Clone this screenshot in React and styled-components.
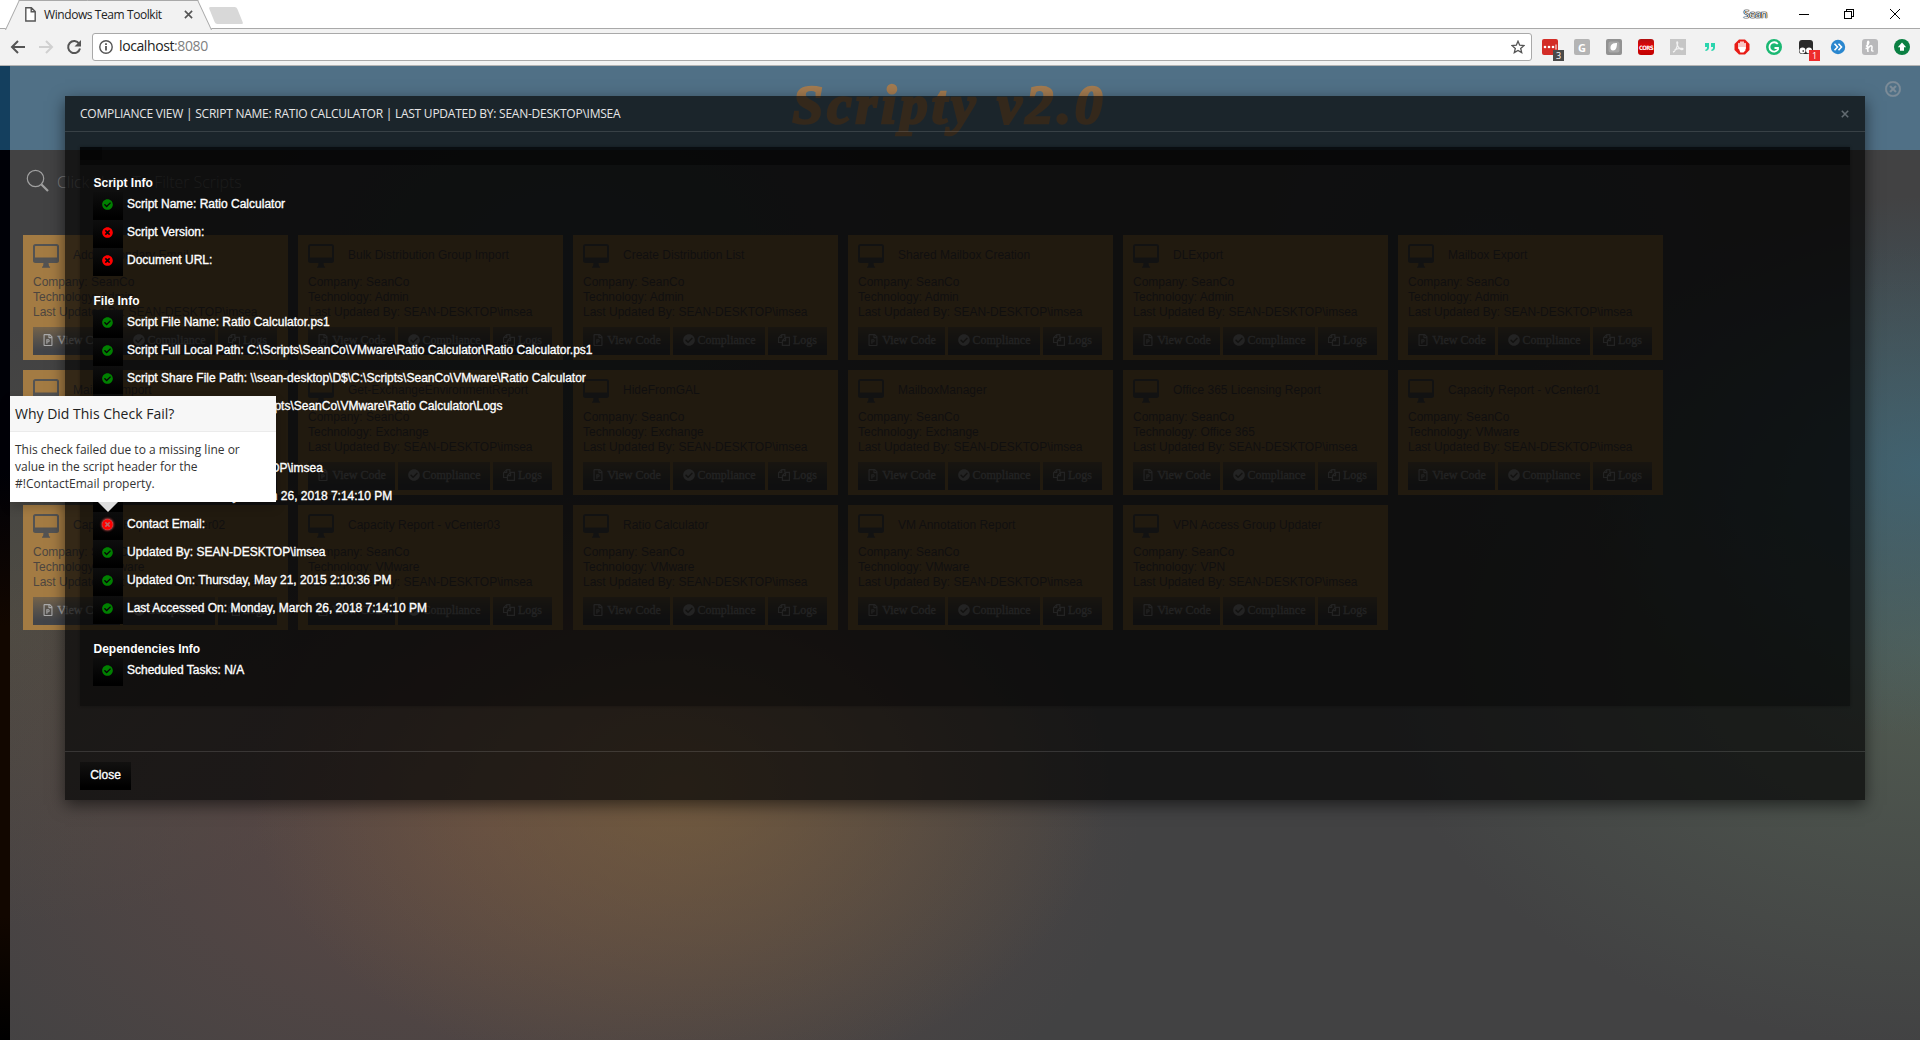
import React from "react";
import styled, { createGlobalStyle, css } from "styled-components";
import {
  FaCheckCircle,
  FaTimesCircle,
  FaRegTimesCircle,
  FaRegFilePowerpoint,
} from "react-icons/fa";

const ui = '"Open Sans", "Noto Sans", sans-serif';
const arial = '"Liberation Sans", Arial, sans-serif';

const GlobalStyle = createGlobalStyle`
  * { box-sizing: border-box; }
  body { margin: 0; background: #000; overflow: hidden; }
`;

const Window = styled.div`
  width: 1920px;
  height: 1040px;
  display: flex;
  flex-direction: column;
  overflow: hidden;
  font-family: ${arial};
`;

/* ---------- browser chrome ---------- */

const TabStrip = styled.div`
  height: 29px;
  display: flex;
  align-items: flex-start;
  background: #fff;
  border-bottom: 1px solid #a9a9a9;
  padding-left: 12px;
`;

const Tab = styled.div`
  position: relative;
  z-index: 1;
  width: 193px;
  height: 29px;
  display: flex;
  align-items: center;
  padding: 0 0 0 13px;
  font: 12px ${ui};
  color: #222;
  &::before,
  &::after {
    content: "";
    position: absolute;
    z-index: -1;
    top: 0;
    height: 29px;
    width: 110px;
    background: #f2f2f2;
    border-top: 1px solid #a9a9a9;
  }
  &::before {
    left: 0;
    border-left: 1px solid #a9a9a9;
    transform: skewX(-25deg);
  }
  &::after {
    right: 0;
    border-right: 1px solid #a9a9a9;
    transform: skewX(25deg);
  }
`;

const TabTitle = styled.span`
  margin-left: 8px;
  width: 140px;
  white-space: nowrap;
  letter-spacing: -0.42px;
  line-height: 28px;
`;

const NewTab = styled.div`
  width: 28px;
  height: 17px;
  margin: 7px 0 0 7px;
  border-radius: 2px;
  background: #d8d8d8;
  transform: skewX(22deg);
`;

const WindowControls = styled.div`
  margin-left: auto;
  height: 27px;
  display: flex;
  align-items: center;
  padding-right: 20px;
`;

const UserName = styled.span`
  font: 11px ${ui};
  letter-spacing: -0.4px;
  color: #fff;
  text-shadow: 0 0 1px #000, 0 0 1px #000, 0 0 1px #000, 0 0 1px #222;
  margin-right: 32px;
`;

const ControlIcon = styled.svg`
  width: 10px;
  height: 10px;
  margin-left: ${(p) => p.$gap || 0}px;
  fill: none;
  stroke: #000;
  shape-rendering: ${(p) => (p.$smooth ? "auto" : "crispEdges")};
`;

const Toolbar = styled.div`
  height: 37px;
  display: flex;
  align-items: center;
  background: #f2f2f2;
  border-bottom: 1px solid #b4b4b4;
  padding: 0 10px 0 10px;
`;

const NavIcon = styled.svg`
  width: 16px;
  height: 16px;
  margin-right: 12px;
  fill: none;
  stroke: ${(p) => (p.$off ? "#d0d0d0" : "#555")};
  stroke-width: 2;
`;

const AddressBar = styled.div`
  width: 1440px;
  height: 28px;
  display: flex;
  align-items: center;
  margin-left: -2px;
  padding: 0 6px;
  background: #fff;
  border: 1px solid #a9a9a9;
  border-radius: 3px;
  font: 14px/24px ${ui};
  color: #222;
`;

const Url = styled.span`
  flex: 1;
  margin: -2px 0 0 6px;
  letter-spacing: -0.4px;
  i {
    font-style: normal;
    color: #808080;
  }
`;

const Extensions = styled.div`
  display: flex;
  gap: 16px;
  margin-left: 10px;
`;

const Ext = styled.div`
  position: relative;
  width: 16px;
  height: 16px;
  display: flex;
  align-items: center;
  justify-content: center;
  border-radius: ${(p) => p.$radius ?? 2}px;
  background: ${(p) => p.$bg || "transparent"};
  color: ${(p) => p.$color || "#fff"};
  font: ${(p) => p.$font || `bold 11px ${ui}`};
  letter-spacing: ${(p) => p.$spacing || 0};
  svg {
    width: 16px;
    height: 16px;
    display: block;
  }
`;

const Badge = styled.span`
  position: absolute;
  left: 11px;
  top: 11px;
  width: 11px;
  height: 11px;
  line-height: 11px;
  text-align: center;
  background: ${(p) => p.$bg};
  color: #fff;
  font: 9px/11px ${ui};
`;

/* ---------- page behind the dialog ---------- */

const Page = styled.div`
  position: relative;
  flex: 1;
  display: flex;
  background: linear-gradient(#143f5e 84px, #000107 84px, #000107 400px, #120700 560px, #120700 850px, #000 100%);
  padding-left: 10px;
`;

const Workspace = styled.main`
  flex: 1;
  display: flex;
  flex-direction: column;
  background:
    radial-gradient(ellipse 430px 300px at 670px 720px, rgba(125, 98, 60, 0.7), rgba(125, 98, 60, 0) 100%),
    radial-gradient(ellipse 650px 400px at 480px 760px, rgba(110, 76, 70, 0.6), rgba(110, 76, 70, 0) 100%),
    radial-gradient(ellipse 360px 270px at 1910px 400px, rgba(62, 104, 124, 0.75), rgba(62, 100, 116, 0) 100%),
    radial-gradient(ellipse 560px 400px at 1920px 580px, rgba(92, 110, 92, 0.6), rgba(92, 104, 92, 0) 100%),
    radial-gradient(ellipse 420px 300px at 560px 200px, rgba(56, 84, 96, 0.5), rgba(56, 84, 96, 0) 100%),
    radial-gradient(ellipse 300px 300px at 1480px 200px, rgba(56, 76, 92, 0.5), rgba(56, 84, 96, 0) 100%),
    radial-gradient(ellipse 400px 300px at 0px 560px, rgba(84, 80, 66, 0.6), rgba(84, 80, 66, 0) 100%),
    #424243;
`;

const Banner = styled.header`
  height: 84px;
  display: flex;
  align-items: flex-start;
  background: #507086;
`;

const Logo = styled.h1`
  flex: 1;
  margin: 4px 0 0 4px;
  text-align: center;
  font: italic bold 55px/70px "Liberation Serif", "Times New Roman", serif;
  letter-spacing: 4px;
  color: #a37b50;
  -webkit-text-stroke: 2.5px #a37b50;
`;

const BannerClose = styled(FaRegTimesCircle)`
  width: 16px;
  height: 16px;
  margin: 15px 19px 0 0;
  color: #7e8d99;
  stroke: #7e8d99;
  stroke-width: 16px;
`;

const Search = styled.div`
  height: 85px;
  display: flex;
  align-items: flex-start;
  padding: 19px 0 0 16px;
  font: 300 16px/26px ${ui};
  color: #808080;
  svg {
    width: 24px;
    height: 24px;
    fill: none;
    stroke: #a0a0a0;
  }
  span {
    margin-left: 7px;
    letter-spacing: -0.06px;
  }
`;

const CardGrid = styled.div`
  display: grid;
  grid-template-columns: repeat(6, 265px);
  grid-auto-rows: 125px;
  gap: 10px;
  padding-left: 13px;
`;

const Card = styled.article`
  display: flex;
  flex-direction: column;
  padding: 7px 10px 5px;
  background: #a37b43;
  color: #4d4640;
  font-size: 12px;
  line-height: 15px;
`;

const CardHead = styled.div`
  display: flex;
  align-items: center;
  gap: 14px;
  height: 27px;
  margin-bottom: 6px;
  svg {
    width: 26px;
    height: 25px;
    fill: none;
    stroke: #535353;
  }
`;

const CardActions = styled.div`
  display: flex;
  gap: 3px;
  margin-top: auto;
`;

const CardButton = styled.button`
  width: ${(p) => p.$w}px;
  height: 28px;
  display: flex;
  align-items: center;
  justify-content: center;
  gap: 3px;
  padding: 0 0 2px;
  border: 0;
  background: linear-gradient(#75634a, #5a544c 40%, #424449 85%);
  color: #aaa;
  font: 12px "Liberation Serif", "Times New Roman", serif;
  -webkit-text-stroke: 0.3px #aaa;
  svg {
    width: 12px;
    height: 12px;
    stroke-width: 0;
  }
`;

/* ---------- compliance dialog ---------- */

const Dialog = styled.section`
  position: absolute;
  left: 65px;
  top: 30px;
  width: 1800px;
  height: 704px;
  display: flex;
  flex-direction: column;
  background: rgba(5, 5, 5, 0.704);
  box-shadow: 0 5px 15px rgba(0, 0, 0, 0.55);
`;

const DialogHeader = styled.div`
  height: 36px;
  display: flex;
  align-items: center;
  justify-content: space-between;
  padding: 0 16px 0 15px;
  border-bottom: 1px solid rgba(255, 255, 255, 0.13);
  font: 12px ${ui};
  letter-spacing: -0.24px;
  color: #e6e6e6;
  svg {
    width: 8px;
    height: 8px;
    stroke: #626b71;
    stroke-width: 2;
  }
`;

const DialogBody = styled.div`
  flex: 1;
  padding: 15px 15px 0;
`;

const Panel = styled.div`
  height: 559px;
  display: flex;
  flex-direction: column;
  background: rgba(0, 0, 0, 0.35);
  box-shadow: 0 0 3px rgba(0, 0, 0, 0.3);
`;

const PanelTabs = styled.div`
  height: 18px;
  background: rgba(0, 0, 0, 0.42);
  &::before {
    content: "";
    display: block;
    width: 22px;
    height: 13px;
    background: rgba(0, 0, 0, 0.35);
  }
`;

const Groups = styled.div`
  display: flex;
  flex-direction: column;
  gap: 16px;
  padding: 9px 13px;
`;

const GroupTitle = styled.h2`
  margin: 0 0 0 0.5px;
  font: bold 12px/18px ${arial};
  color: #fff;
`;

const CheckRow = styled.div`
  height: 28px;
  display: flex;
  color: #fff;
  font-size: 12px;
  line-height: 25px;
  white-space: pre;
  -webkit-text-stroke: 0.35px #fff;
`;

const CheckBox = styled.span`
  width: 30px;
  height: 28px;
  margin-right: 4px;
  display: flex;
  justify-content: center;
  padding: 7px 1px 0 0;
  background: linear-gradient(#0e0e0e, #000 90%);
  color: ${(p) => (p.$pass ? "#008000" : "#ff0000")};
  svg {
    width: 11px;
    height: 11px;
    ${(p) =>
      p.$active &&
      css`
        border-radius: 50%;
        background: #b66;
        box-shadow: 0 0 2px 1px rgba(255, 90, 90, 0.6);
      `}
  }
`;

const DialogFooter = styled.div`
  height: 49px;
  padding: 10px 15px;
  border-top: 1px solid rgba(255, 255, 255, 0.13);
`;

const CloseButton = styled.button`
  width: 51px;
  height: 28px;
  padding: 0 0 3px;
  border: 0;
  background: linear-gradient(#121110, #000 90%);
  color: #fff;
  font: 12px ${arial};
  -webkit-text-stroke: 0.35px #fff;
`;

const Popover = styled.div`
  position: absolute;
  left: 10px;
  top: 330px;
  width: 266px;
  height: 106px;
  background: #fff;
  font-family: ${ui};
  color: #333;
  box-shadow: 0 5px 10px rgba(0, 0, 0, 0.2);
  &::after {
    content: "";
    position: absolute;
    left: 88px;
    top: 106px;
    border: 10px solid transparent;
    border-top-color: #dedede;
    border-bottom: 0;
  }
`;

const PopoverTitle = styled.div`
  height: 36px;
  padding-left: 5px;
  background: #f7f7f7;
  border-bottom: 1px solid #ebebeb;
  font-size: 14px;
  line-height: 35px;
  color: #222;
  letter-spacing: 0;
`;

const PopoverBody = styled.div`
  padding: 9px 20px 0 5px;
  font-size: 12px;
  line-height: 17px;
`;

const DesktopGlyph = () => (
  <svg viewBox="0 0 26 25">
    <rect x="1" y="2" width="24" height="17" rx="1.5" strokeWidth="2" />
    <path d="M1 15h24v3.5H1z" fill="#535353" strokeWidth="1" />
    <path d="M10.5 20h5l.6 3.4h1v1.4H9v-1.4h1z" fill="#535353" stroke="none" />
  </svg>
);

const FilesGlyph = () => (
  <svg viewBox="0 0 13 13">
    <path
      d="M3.8.6h3.6v3M4 .6v3.2H.6M4 .6L.6 4v5.2h4M8.2 3.6h4.2v8.8H4.8V7zM8.2 3.6v3.6H4.8"
      fill="none"
      stroke="#aaa"
      strokeWidth="1.3"
    />
  </svg>
);

const Cross = ({ w = 1 }) => (
  <svg viewBox="0 0 10 10" width="9" height="9" stroke="#555" strokeWidth={w}>
    <path d="M1 1l8 8M9 1l-8 8" />
  </svg>
);

const cards = [
  ["Add Secondary Email", "Admin"],
  ["Bulk Distribution Group Import", "Admin"],
  ["Create Distribution List", "Admin"],
  ["Shared Mailbox Creation", "Admin"],
  ["DLExport", "Admin"],
  ["Mailbox Export", "Admin"],
  ["Mailbox Import", "Exchange"],
  ["Get-ExchangeEnvironmentReport", "Exchange"],
  ["HideFromGAL", "Exchange"],
  ["MailboxManager", "Exchange"],
  ["Office 365 Licensing Report", "Office 365"],
  ["Capacity Report - vCenter01", "VMware"],
  ["Capacity Report - vCenter02", "VMware"],
  ["Capacity Report - vCenter03", "VMware"],
  ["Ratio Calculator", "VMware"],
  ["VM Annotation Report", "VMware"],
  ["VPN Access Group Updater", "VPN"],
];

const groups = [
  {
    title: "Script Info",
    checks: [
      ["Script Name: Ratio Calculator", true],
      ["Script Version:", false],
      ["Document URL:", false],
    ],
  },
  {
    title: "File Info",
    checks: [
      ["Script File Name: Ratio Calculator.ps1", true],
      ["Script Full Local Path: C:\\Scripts\\SeanCo\\VMware\\Ratio Calculator\\Ratio Calculator.ps1", true],
      ["Script Share File Path: \\\\sean-desktop\\D$\\C:\\Scripts\\SeanCo\\VMware\\Ratio Calculator", true],
      ["Script Log File Path: C:\\Scripts\\SeanCo\\VMware\\Ratio Calculator\\Logs", true],
    ],
  },
  {
    title: "User Info",
    checks: [
      ["Created By: SEAN-DESKTOP\\imsea", true],
      ["Created On: Monday, March 26, 2018 7:14:10 PM", true],
      ["Contact Email:", false, true],
      ["Updated By: SEAN-DESKTOP\\imsea", true],
      ["Updated On: Thursday, May 21, 2015 2:10:36 PM", true],
      ["Last Accessed On: Monday, March 26, 2018 7:14:10 PM", true],
    ],
  },
  { title: "Dependencies Info", checks: [["Scheduled Tasks: N/A", true]] },
];

const BrowserChrome = () => (
  <>
    <TabStrip>
      <Tab>
        <svg width="11" height="15" viewBox="0 0 11 15" fill="#fff" stroke="#555" strokeWidth="1.4">
          <path d="M.8.8h5.6l3.8 3.8v9.4H.8zM6.2 1v3.8h4" />
        </svg>
        <TabTitle>Windows Team Toolkit</TabTitle>
        <Cross w={1.8} />
      </Tab>
      <NewTab />
      <WindowControls>
        <UserName>Sean</UserName>
        <ControlIcon viewBox="0 0 10 10">
          <path d="M0 5.5h10" />
        </ControlIcon>
        <ControlIcon $gap={35} viewBox="0 0 10 10">
          <path d="M.5 2.5h7v7h-7zM2.5 2.5v-2h7v7h-2" />
        </ControlIcon>
        <ControlIcon $gap={36} $smooth viewBox="0 0 10 10">
          <path d="M0 0l10 10M10 0L0 10" />
        </ControlIcon>
      </WindowControls>
    </TabStrip>
    <Toolbar>
      <NavIcon viewBox="0 0 16 16">
        <path d="M15 8H2.5M8 2L2 8l6 6" />
      </NavIcon>
      <NavIcon $off viewBox="0 0 16 16">
        <path d="M1 8h12.500M8 2l6 6-6 6" />
      </NavIcon>
      <NavIcon viewBox="0 0 16 16">
        <path d="M13.200 4.800A6 6 0 1 0 14 9.500" />
        <path d="M15 1v6.500H8.500z" fill="#555" stroke="none" />
      </NavIcon>
      <AddressBar>
        <svg width="14" height="14" viewBox="0 0 14 14" fill="none" stroke="#555" strokeWidth="1.4">
          <circle cx="7" cy="7" r="6.200" />
          <path d="M7 6v4.500M7 3.200v1.800" strokeWidth="1.800" />
        </svg>
        <Url>
          localhost<i>:8080</i>
        </Url>
        <svg width="14" height="14" viewBox="0 0 14 14" fill="none" stroke="#555" strokeWidth="1.3">
          <path d="M7 1.200l1.700 4 4.300.4-3.300 2.800 1 4.200L7 10.400l-3.700 2.200 1-4.200L1 5.600l4.300-.4z" />
        </svg>
      </AddressBar>
      <Extensions>
        <Ext $bg="#d32d27">
          <svg viewBox="0 0 16 16" fill="#fff">
            <circle cx="3" cy="8" r="1.300" />
            <circle cx="7" cy="8" r="1.300" />
            <circle cx="11" cy="8" r="1.300" />
            <path d="M13.500 5.500h1v5h-1z" />
          </svg>
          <Badge $bg="#4a4a4a">3</Badge>
        </Ext>
        <Ext $bg="#b4b4b4">G</Ext>
        <Ext $bg="#929292">
          <svg viewBox="0 0 16 16">
            <rect x="2.500" y="2.500" width="11" height="11" rx="2" fill="#a8a8a8" />
            <path d="M4.500 8C5 4.500 8 4 11 4c0 4-1 7.500-4 7.500C5 11.500 4.300 10 4.500 8z" fill="#fff" />
          </svg>
        </Ext>
        <Ext $bg="linear-gradient(#b01010, #dc0808 40%, #c00000)" $radius={3} $font='bold 6px "DejaVu Sans Condensed", "DejaVu Sans", sans-serif' $spacing="-0.6px">
          CORS
        </Ext>
        <Ext $bg="#c6c6c6" $radius={0}>
          <svg viewBox="0 0 16 16" fill="none" stroke="#f2f2f2" strokeWidth="1.300">
            <path d="M3 13c2-.5 4.500-4.500 4.700-9.500C7 1.500 6 4 8 7.500s4.500 3.500 5 2.500-5-1-8.500 1" />
          </svg>
        </Ext>
        <Ext>
          <svg viewBox="0 0 16 16" fill="#2bd5ae">
            <path d="M3 4h4v4.500c0 2-1.500 3.500-3.500 3.500l-.3-1.200C4.600 10.500 5.200 9.500 5 8H3zM9 4h4v4.500c0 2-1.500 3.500-3.500 3.500l-.3-1.200c1.400-.3 2-1.300 1.800-2.800H9z" />
          </svg>
        </Ext>
        <Ext>
          <svg viewBox="0 0 16 16">
            <path d="M5 .5h6L15.500 5v6L11 15.500H5L.5 11V5z" fill="#e81c16" />
            <path d="M5 4.500v5M7 3v6M9 3v6M11 4.500v5" stroke="#fff" strokeWidth="1.500" strokeLinecap="round" />
            <path d="M4.300 8h7.500l-.5 3.500-1.800 2H6.300z" fill="#fff" />
          </svg>
        </Ext>
        <Ext $bg="#1bb873" $radius={8}>
          <svg viewBox="0 0 16 16" fill="none" stroke="#fff" strokeWidth="1.800">
            <path d="M11.800 5A4.700 4.700 0 1 0 12 10.600V9H8.500" />
          </svg>
        </Ext>
        <Ext>
          <svg viewBox="0 0 16 16">
            <rect x="1" y="1" width="14" height="14" rx="3" fill="#2b2b2b" />
            <circle cx="4.500" cy="11.500" r="3" fill="#fff" />
            <circle cx="11" cy="11.500" r="3" fill="#fff" />
            <circle cx="5.200" cy="12" r=".8" />
          </svg>
          <Badge $bg="#ee2c2c">1</Badge>
        </Ext>
        <Ext>
          <svg viewBox="0 0 16 16" fill="none" stroke="#fff" strokeWidth="1.600">
            <circle cx="8" cy="8" r="7.200" fill="#2a87cf" stroke="none" />
            <path d="M4.500 4.800L7.500 8l-3 3.200M8.500 4.800L11.500 8l-3 3.200" />
          </svg>
        </Ext>
        <Ext $bg="#b9b9bb" $radius={3}>
          <svg viewBox="0 0 16 16" fill="none" stroke="#fff" strokeWidth="1.500">
            <path d="M4 7.500c2-1.500 3.500-4 2.500-5S5 5 6 13M6.200 9c2-3 4-3 3.800-.5S9 12.500 11.500 12M3.500 9.500h3" />
          </svg>
        </Ext>
        <Ext $bg="#0b8043" $radius={8}>
          <svg viewBox="0 0 16 16" fill="#fff">
            <path d="M8 3.500l4.200 4.700H10v3.600H6V8.200H3.800z" />
          </svg>
        </Ext>
      </Extensions>
    </Toolbar>
  </>
);

const ScriptCard = ({ name, technology }) => (
  <Card>
    <CardHead>
      <DesktopGlyph />
      {name}
    </CardHead>
    <div>Company: SeanCo</div>
    <div>Technology: {technology}</div>
    <div>Last Updated By: SEAN-DESKTOP\imsea</div>
    <CardActions>
      <CardButton $w={87}>
        <FaRegFilePowerpoint />
        View Code
      </CardButton>
      <CardButton $w={92}>
        <FaCheckCircle />
        Compliance
      </CardButton>
      <CardButton $w={59}>
        <FilesGlyph />
        Logs
      </CardButton>
    </CardActions>
  </Card>
);

export default function App() {
  return (
    <Window>
      <GlobalStyle />
      <BrowserChrome />
      <Page>
        <Workspace>
          <Banner>
            <Logo>Scripty v2.0</Logo>
            <BannerClose />
          </Banner>
          <Search>
            <svg viewBox="0 0 24 24">
              <circle cx="9.500" cy="9.500" r="8.200" strokeWidth="1.200" />
              <path d="M15.500 15.500l6.500 6.500" strokeWidth="2.200" />
            </svg>
            <span>Click Here To Filter Scripts</span>
          </Search>
          <CardGrid>
            {cards.map(([name, technology]) => (
              <ScriptCard key={name} name={name} technology={technology} />
            ))}
          </CardGrid>
        </Workspace>
        <Dialog>
          <DialogHeader>
            COMPLIANCE VIEW | SCRIPT NAME: RATIO CALCULATOR | LAST UPDATED BY: SEAN-DESKTOP\IMSEA
            <Cross />
          </DialogHeader>
          <DialogBody>
            <Panel>
              <PanelTabs />
              <Groups>
                {groups.map((group) => (
                  <div key={group.title}>
                    <GroupTitle>{group.title}</GroupTitle>
                    {group.checks.map(([label, pass, active]) => (
                      <CheckRow key={label}>
                        <CheckBox $pass={pass} $active={active}>
                          {pass ? <FaCheckCircle /> : <FaTimesCircle />}
                        </CheckBox>
                        {label}
                      </CheckRow>
                    ))}
                  </div>
                ))}
              </Groups>
            </Panel>
          </DialogBody>
          <DialogFooter>
            <CloseButton>Close</CloseButton>
          </DialogFooter>
        </Dialog>
        <Popover>
          <PopoverTitle>Why Did This Check Fail?</PopoverTitle>
          <PopoverBody>
            This check failed due to a missing line or value in the script header for the #!ContactEmail property.
          </PopoverBody>
        </Popover>
      </Page>
    </Window>
  );
}
